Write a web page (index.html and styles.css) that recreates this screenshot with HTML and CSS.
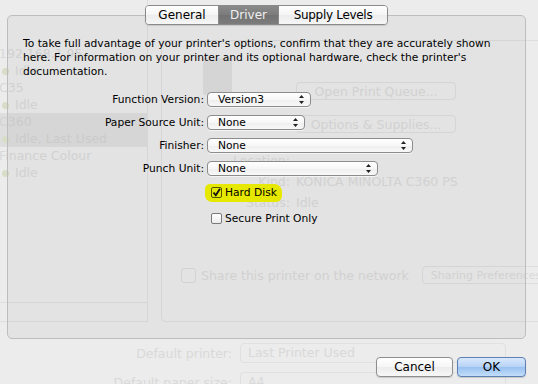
FILE: index.html
```html
<!DOCTYPE html>
<html lang="en">
<head>
    <meta charset="UTF-8">
    <title>Printer Options</title>
    <link rel="stylesheet" href="styles.css">
</head>
<body>
    <!-- print & scan pane seen through the sheet -->
    <div class="backdrop">
        <div class="list">
            <div class="printer">
                <div>192.168.1.95</div>
                <div><i class="dot"></i>Idle</div>
            </div>
            <div class="printer">
                <div>C35</div>
                <div><i class="dot"></i>Idle</div>
            </div>
            <div class="printer sel">
                <div>C360</div>
                <div><i class="dot"></i>Idle, Last Used</div>
            </div>
            <div class="printer">
                <div>Finance Colour</div>
                <div><i class="dot"></i>Idle</div>
            </div>
            <div class="list-foot"></div>
        </div>

        <div class="detail">
            <div class="head">
                <div class="printer-icon"></div>
                <div class="head-buttons">
                    <span class="ghost-btn">Open Print Queue...</span>
                    <span class="ghost-btn">Options &amp; Supplies...</span>
                </div>
            </div>
            <div class="info">
                <span class="info-label">Location:</span><span></span>
                <span class="info-label">Kind:</span><span>KONICA MINOLTA C360 PS</span>
                <span class="info-label">Status:</span><span>Idle</span>
            </div>
            <div class="share">
                <span class="ghost-check"></span>
                <span class="share-text">Share this printer on the network</span>
                <span class="ghost-btn small">Sharing Preferences...</span>
            </div>
        </div>

        <div class="defaults">
            <span class="def-label">Default printer:</span>
            <span class="ghost-popup">Last Printer Used</span>
            <span class="def-label">Default paper size:</span>
            <span class="ghost-popup">A4</span>
        </div>
    </div>

    <!-- the options sheet -->
    <div class="sheet">
        <div class="tabs">
            <span class="tab tab-general">General</span>
            <span class="tab tab-driver active">Driver</span>
            <span class="tab tab-supply">Supply Levels</span>
        </div>

        <div class="group">
            <p class="intro">To take full advantage of your printer's options, confirm that they are accurately shown<br>here. For information on your printer and its optional hardware, check the printer's<br>documentation.</p>

            <div class="form">
                <label class="form-label">Function Version:</label>
                <span class="popup w-function"><span>Version3</span><svg class="arrows" width="5" height="9" viewBox="0 0 5 9"><path d="M2.5 0 5 3H0zM0 6h5L2.5 9z" fill="#222"/></svg></span>

                <label class="form-label">Paper Source Unit:</label>
                <span class="popup w-source"><span>None</span><svg class="arrows" width="5" height="9" viewBox="0 0 5 9"><path d="M2.5 0 5 3H0zM0 6h5L2.5 9z" fill="#222"/></svg></span>

                <label class="form-label">Finisher:</label>
                <span class="popup w-finisher"><span>None</span><svg class="arrows" width="5" height="9" viewBox="0 0 5 9"><path d="M2.5 0 5 3H0zM0 6h5L2.5 9z" fill="#222"/></svg></span>

                <label class="form-label">Punch Unit:</label>
                <span class="popup w-punch"><span>None</span><svg class="arrows" width="5" height="9" viewBox="0 0 5 9"><path d="M2.5 0 5 3H0zM0 6h5L2.5 9z" fill="#222"/></svg></span>

                <span></span>
                <span class="check-row first">
                    <span class="marker">
                        <span class="check checked"><svg width="9" height="9" viewBox="0 0 9 9"><path d="M1.5 4.5 3.8 7.3 8 0.8" fill="none" stroke="#111" stroke-width="1.8"/></svg></span>
                        <span>Hard Disk</span>
                    </span>
                </span>

                <span></span>
                <span class="check-row second">
                    <span class="check"></span>
                    <span>Secure Print Only</span>
                </span>
            </div>
        </div>

        <div class="actions">
            <button class="btn cancel">Cancel</button>
            <button class="btn ok">OK</button>
        </div>
    </div>
</body>
</html>
```

FILE: styles.css
```css
html, body {
    margin: 0;
    width: 538px;
    height: 384px;
    overflow: hidden;
}

body {
    position: relative;
    background-color: #ececec;
    font-family: "DejaVu Sans", sans-serif;
}

/* ghosted pane behind the sheet */
.backdrop {
    display: grid;
    grid-template-columns: 148px 1fr;
    grid-template-rows: 322px 62px;
    font-size: 12.5px;
    color: #d9d9d9;
}

.list {
    display: flex;
    flex-direction: column;
    padding-top: 45px;
    border-right: 1px solid #dedede;
    box-sizing: border-box;
}

.printer {
    height: 34px;
    line-height: 17px;
    margin-left: -1px;
    white-space: nowrap;
}

.printer.sel {
    background-color: #dedede;
    color: #d3d3d3;
}

.dot {
    display: inline-block;
    width: 7px;
    height: 7px;
    border-radius: 50%;
    background-color: #d8ddc8;
    margin: 0 6px 0 3px;
}

.list-foot {
    margin-top: auto;
    height: 20px;
    border-top: 1px solid #dddddd;
    border-bottom: 1px solid #dddddd;
    box-sizing: border-box;
}

.detail {
    margin: 40px 0 0 13px;
    border: 1px solid #dddddd;
    border-right: none;
    border-radius: 5px 0 0 5px;
}

.head {
    display: flex;
    padding-left: 41px;
}

.printer-icon {
    width: 29px;
    height: 37px;
    margin-top: 17px;
    background-color: #dddddd;
    border-radius: 2px;
}

.head-buttons {
    display: flex;
    flex-direction: column;
    gap: 15px;
    margin: 41px 0 0 64px;
}

.ghost-btn {
    display: flex;
    align-items: center;
    justify-content: center;
    width: 160px;
    height: 18px;
    border: 1px solid #dddddd;
    border-radius: 4px;
    box-sizing: border-box;
}

.ghost-btn.small {
    width: 125px;
    justify-content: flex-start;
    padding-left: 8px;
    font-size: 11px;
    white-space: nowrap;
}

.info {
    display: grid;
    grid-template-columns: 128px auto;
    column-gap: 6px;
    grid-auto-rows: 21px;
    align-items: center;
    margin-top: 17px;
}

.info-label {
    text-align: right;
}

.share {
    display: flex;
    align-items: center;
    margin: 53px 0 0 19px;
    white-space: nowrap;
}

.ghost-check {
    width: 13px;
    height: 13px;
    border: 1px solid #dadada;
    border-radius: 3px;
    margin-right: 5px;
}

.share-text {
    margin-right: 13px;
}

.defaults {
    grid-column: span 2;
    display: grid;
    grid-template-columns: 232px 266px;
    column-gap: 8px;
    row-gap: 9px;
    align-items: center;
    padding-top: 21px;
}

.def-label {
    text-align: right;
}

.ghost-popup {
    height: 20px;
    line-height: 18px;
    padding-left: 7px;
    border: 1px solid #e0e0e0;
    border-radius: 4px;
    box-sizing: border-box;
}

/* sheet */
.sheet {
    position: absolute;
    top: 0;
    left: 0;
    right: 0;
    bottom: 0;
    display: flex;
    flex-direction: column;
    padding: 5px 12px 0 7px;
    color: #000000;
}

.tabs {
    display: flex;
    align-self: center;
    margin-bottom: -10px;
    position: relative;
    z-index: 1;
    border: 1px solid #8a8a8a;
    border-radius: 4px;
    overflow: hidden;
    box-shadow: 0 1px 1px rgba(0, 0, 0, 0.12);
}

.tab {
    height: 18px;
    line-height: 18px;
    font-size: 12px;
    text-align: center;
    background: linear-gradient(#ffffff, #f4f4f4 50%, #ececec 51%, #f6f6f6);
}

.tab + .tab {
    border-left: 1px solid #8a8a8a;
}

.tab-general { width: 72px; }
.tab-driver { width: 59px; }
.tab-supply { width: 108px; letter-spacing: -0.3px; }

.tab.active {
    background: linear-gradient(#8a8a8a, #7b7b7b 50%, #727272 51%, #7c7c7c);
    color: #f0f0f0;
}

.group {
    height: 324px;
    box-sizing: border-box;
    border: 1px solid #bdbdbd;
    border-radius: 5px;
    background-color: rgba(0, 0, 0, 0.035);
    padding: 21px 14px 0 15px;
    font-size: 10.7px;
}

.intro {
    margin: 0;
    line-height: 14px;
    white-space: nowrap;
}

.form {
    display: grid;
    grid-template-columns: 181px auto;
    column-gap: 3px;
    row-gap: 8px;
    align-items: center;
    justify-items: start;
    margin-top: 13px;
}

.form-label {
    justify-self: end;
}

.popup {
    display: flex;
    align-items: center;
    justify-content: space-between;
    height: 15px;
    box-sizing: border-box;
    padding: 0 6px 0 10px;
    border: 1px solid #8c8c8c;
    border-radius: 4px;
    background: linear-gradient(#ffffff, #f7f7f7 50%, #eeeeee 51%, #f8f8f8);
    box-shadow: 0 1px 0 rgba(255, 255, 255, 0.6);
    line-height: 13px;
}

.w-function { width: 104px; }
.w-source { width: 98px; }
.w-finisher { width: 206px; }
.w-punch { width: 171px; }

.check-row {
    display: flex;
    align-items: center;
    height: 14px;
    margin-left: -2px;
}

.check-row.first { margin-top: 1px; }
.check-row.second { margin-top: 4px; margin-left: 4px; }

.marker {
    display: flex;
    align-items: center;
    padding: 2px 5px 3px 6px;
    margin: -2px 0 -3px 0;
    background-color: #e6e800;
    border-radius: 5px 8px 6px 7px;
}

.check {
    display: inline-flex;
    align-items: center;
    justify-content: center;
    width: 11px;
    height: 11px;
    box-sizing: border-box;
    margin-right: 3px;
    border: 1px solid #7a7a7a;
    border-radius: 2px;
    background: linear-gradient(#ffffff, #ececec);
}

.check.checked {
    background: transparent;
    border-color: #555500;
}

.actions {
    display: flex;
    align-self: flex-end;
    gap: 4px;
    margin-top: 18px;
}

.btn {
    height: 20px;
    padding: 0;
    font-family: "DejaVu Sans", sans-serif;
    font-size: 12px;
    color: #000000;
    border-radius: 4px;
    box-shadow: 0 1px 1px rgba(0, 0, 0, 0.15);
}

.cancel {
    width: 77px;
    border: 1px solid #8e8e8e;
    background: linear-gradient(#ffffff, #f6f6f6 50%, #ececec 51%, #f7f7f7);
}

.ok {
    width: 69px;
    border: 1px solid #5d7fb4;
    background: linear-gradient(#d9e8fb, #b6d3f6 50%, #98c0f1 51%, #c2def9);
}
```
